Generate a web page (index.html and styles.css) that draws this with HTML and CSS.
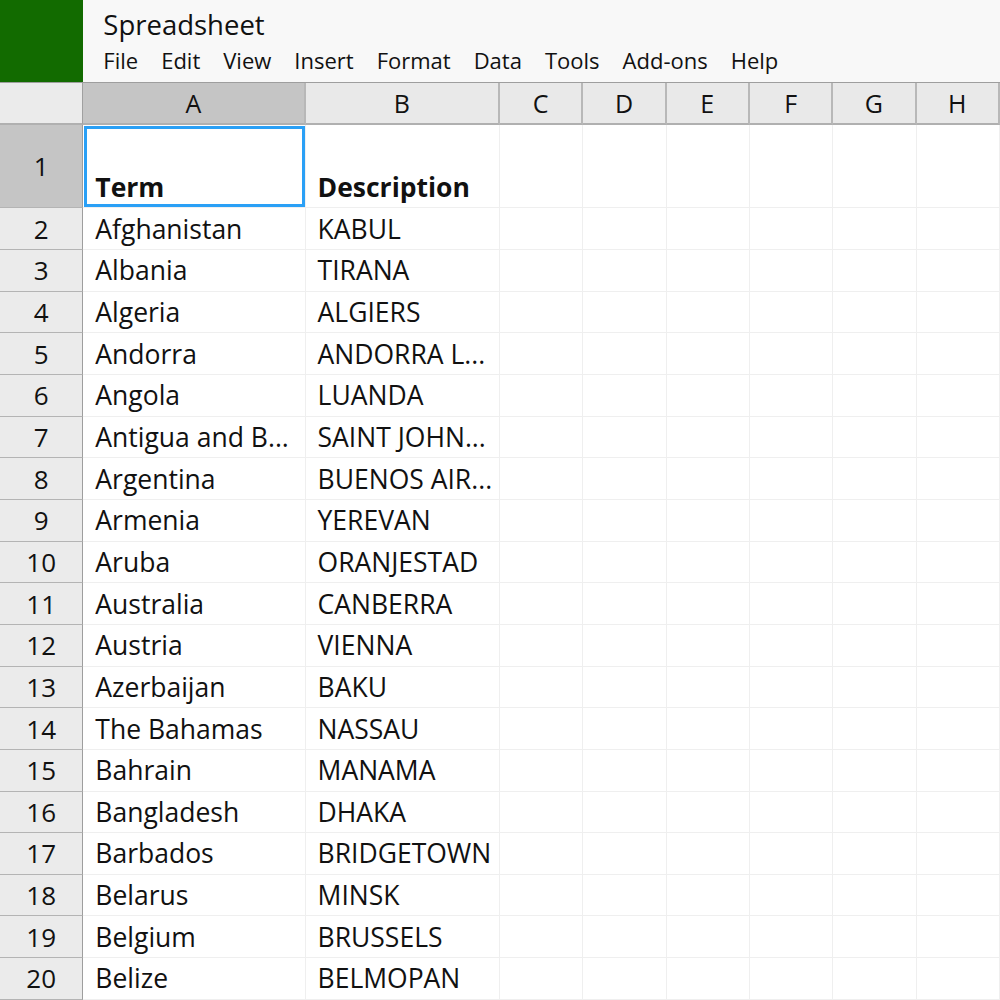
FILE: index.html
```html
<!DOCTYPE html>
<html lang="en">
<head>
<meta charset="utf-8">
<title>Spreadsheet</title>
<link rel="stylesheet" href="styles.css">
</head>
<body>
<div class="app">
  <header class="topbar">
    <div class="logo"></div>
    <div class="titlebox">
      <div class="title">Spreadsheet</div>
      <nav class="menu">
        <span>File</span><span>Edit</span><span>View</span><span>Insert</span><span>Format</span><span>Data</span><span>Tools</span><span>Add-ons</span><span>Help</span>
      </nav>
    </div>
  </header>
  <div class="sheet">
    <div class="corner"></div>
    <div class="colhead sel">A</div><div class="colhead">B</div><div class="colhead">C</div><div class="colhead">D</div><div class="colhead">E</div><div class="colhead">F</div><div class="colhead">G</div><div class="colhead">H</div>

    <div class="rowhead sel">1</div>
    <div class="cell head selected">Term</div><div class="cell head">Description</div><div class="cell"></div><div class="cell"></div><div class="cell"></div><div class="cell"></div><div class="cell"></div><div class="cell"></div>

    <div class="rowhead">2</div><div class="cell">Afghanistan</div><div class="cell">KABUL</div><div class="cell"></div><div class="cell"></div><div class="cell"></div><div class="cell"></div><div class="cell"></div><div class="cell"></div>
    <div class="rowhead">3</div><div class="cell">Albania</div><div class="cell">TIRANA</div><div class="cell"></div><div class="cell"></div><div class="cell"></div><div class="cell"></div><div class="cell"></div><div class="cell"></div>
    <div class="rowhead">4</div><div class="cell">Algeria</div><div class="cell">ALGIERS</div><div class="cell"></div><div class="cell"></div><div class="cell"></div><div class="cell"></div><div class="cell"></div><div class="cell"></div>
    <div class="rowhead">5</div><div class="cell">Andorra</div><div class="cell">ANDORRA L...</div><div class="cell"></div><div class="cell"></div><div class="cell"></div><div class="cell"></div><div class="cell"></div><div class="cell"></div>
    <div class="rowhead">6</div><div class="cell">Angola</div><div class="cell">LUANDA</div><div class="cell"></div><div class="cell"></div><div class="cell"></div><div class="cell"></div><div class="cell"></div><div class="cell"></div>
    <div class="rowhead">7</div><div class="cell">Antigua and B...</div><div class="cell">SAINT JOHN...</div><div class="cell"></div><div class="cell"></div><div class="cell"></div><div class="cell"></div><div class="cell"></div><div class="cell"></div>
    <div class="rowhead">8</div><div class="cell">Argentina</div><div class="cell">BUENOS AIR...</div><div class="cell"></div><div class="cell"></div><div class="cell"></div><div class="cell"></div><div class="cell"></div><div class="cell"></div>
    <div class="rowhead">9</div><div class="cell">Armenia</div><div class="cell">YEREVAN</div><div class="cell"></div><div class="cell"></div><div class="cell"></div><div class="cell"></div><div class="cell"></div><div class="cell"></div>
    <div class="rowhead">10</div><div class="cell">Aruba</div><div class="cell">ORANJESTAD</div><div class="cell"></div><div class="cell"></div><div class="cell"></div><div class="cell"></div><div class="cell"></div><div class="cell"></div>
    <div class="rowhead">11</div><div class="cell">Australia</div><div class="cell">CANBERRA</div><div class="cell"></div><div class="cell"></div><div class="cell"></div><div class="cell"></div><div class="cell"></div><div class="cell"></div>
    <div class="rowhead">12</div><div class="cell">Austria</div><div class="cell">VIENNA</div><div class="cell"></div><div class="cell"></div><div class="cell"></div><div class="cell"></div><div class="cell"></div><div class="cell"></div>
    <div class="rowhead">13</div><div class="cell">Azerbaijan</div><div class="cell">BAKU</div><div class="cell"></div><div class="cell"></div><div class="cell"></div><div class="cell"></div><div class="cell"></div><div class="cell"></div>
    <div class="rowhead">14</div><div class="cell">The Bahamas</div><div class="cell">NASSAU</div><div class="cell"></div><div class="cell"></div><div class="cell"></div><div class="cell"></div><div class="cell"></div><div class="cell"></div>
    <div class="rowhead">15</div><div class="cell">Bahrain</div><div class="cell">MANAMA</div><div class="cell"></div><div class="cell"></div><div class="cell"></div><div class="cell"></div><div class="cell"></div><div class="cell"></div>
    <div class="rowhead">16</div><div class="cell">Bangladesh</div><div class="cell">DHAKA</div><div class="cell"></div><div class="cell"></div><div class="cell"></div><div class="cell"></div><div class="cell"></div><div class="cell"></div>
    <div class="rowhead">17</div><div class="cell">Barbados</div><div class="cell">BRIDGETOWN</div><div class="cell"></div><div class="cell"></div><div class="cell"></div><div class="cell"></div><div class="cell"></div><div class="cell"></div>
    <div class="rowhead">18</div><div class="cell">Belarus</div><div class="cell">MINSK</div><div class="cell"></div><div class="cell"></div><div class="cell"></div><div class="cell"></div><div class="cell"></div><div class="cell"></div>
    <div class="rowhead">19</div><div class="cell">Belgium</div><div class="cell">BRUSSELS</div><div class="cell"></div><div class="cell"></div><div class="cell"></div><div class="cell"></div><div class="cell"></div><div class="cell"></div>
    <div class="rowhead">20</div><div class="cell">Belize</div><div class="cell">BELMOPAN</div><div class="cell"></div><div class="cell"></div><div class="cell"></div><div class="cell"></div><div class="cell"></div><div class="cell"></div>
  </div>
</div>
</body>
</html>
```
FILE: styles.css
```css
* { box-sizing: border-box; }
html, body { margin: 0; padding: 0; }
body {
  width: 1000px;
  height: 1000px;
  overflow: hidden;
  background: #ffffff;
  font-family: "Open Sans", "Noto Sans", sans-serif;
  color: #111111;
}
.app { display: flex; flex-direction: column; width: 1000px; }

.topbar {
  display: flex;
  height: 83.333px;
  background: #f8f8f8;
  border-bottom: 1px solid #9e9e9e;
}
.logo {
  width: 83.333px;
  flex: none;
  background: #126b00;
}
.titlebox {
  display: flex;
  flex-direction: column;
  padding: 6px 0 0 20px;
}
.title {
  font-size: 27.5px;
  line-height: 38px;
}
.menu {
  display: flex;
  gap: 23px;
  font-size: 22px;
  line-height: 30px;
  margin-top: 1px;
}

.sheet {
  display: grid;
  grid-template-columns: 83.333px 222.222px 194.444px repeat(6, 83.333px);
  grid-template-rows: 41.667px 83.333px repeat(19, 41.667px);
}
.corner {
  background: #ebebeb;
  border-right: 1px solid #a0a0a0;
  border-bottom: 2px solid #b0b0b0;
}
.colhead {
  display: flex;
  align-items: center;
  justify-content: center;
  background: #e9e9e9;
  border-right: 2px solid #b8b8b8;
  border-bottom: 2px solid #b0b0b0;
  font-size: 25px;
}
.colhead.sel { background: #c5c5c5; }
.rowhead {
  display: flex;
  align-items: center;
  justify-content: center;
  background: #ebebeb;
  border-right: 1px solid #9e9e9e;
  border-bottom: 1px solid #b4b4b4;
  font-size: 26px;
}
.rowhead.sel { background: #c5c5c5; }
.cell {
  display: flex;
  align-items: center;
  padding: 0 4px 0 12px;
  border-right: 1px solid #efefef;
  border-bottom: 1px solid #efefef;
  font-size: 26.5px;
  white-space: nowrap;
  overflow: hidden;
  text-overflow: ellipsis;
  min-width: 0;
}
.cell.head {
  align-items: flex-end;
  padding-bottom: 2px;
  font-weight: 700;
}
.cell.selected {
  outline: 3px solid #2aa0f6;
  outline-offset: -4px;
}
```
